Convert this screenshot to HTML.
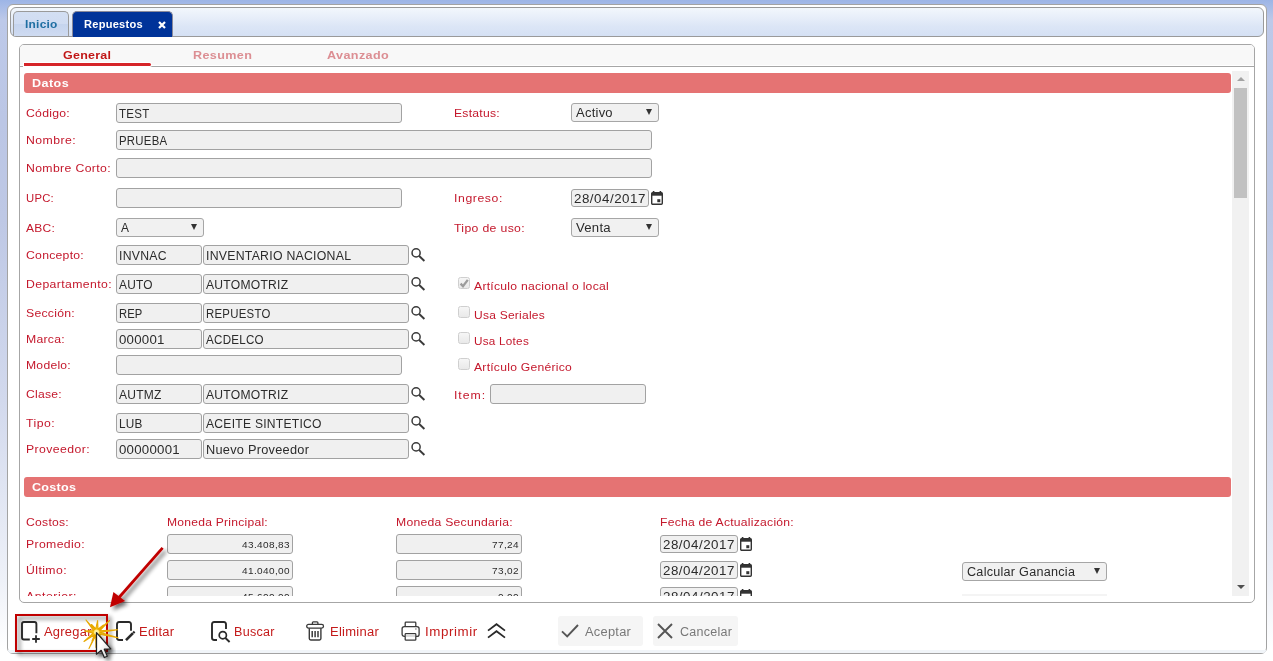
<!DOCTYPE html>
<html><head><meta charset="utf-8"><title>Repuestos</title>
<style>
html,body{margin:0;padding:0;}
body{width:1273px;height:661px;overflow:hidden;position:relative;font-family:"Liberation Sans",sans-serif;
 background:linear-gradient(to bottom,#9db5e6 0px,#a8bce7 7px,#bdc9e9 20px,#bbc6e5 120px,#bec8e5 220px,#d2d9ed 400px,#eef1f8 580px,#ffffff 650px);}
.abs{position:absolute;box-sizing:border-box;}
.t{position:absolute;white-space:nowrap;line-height:20px;height:20px;transform-origin:0 0;}
.in{position:absolute;box-sizing:border-box;border:1px solid #a2a2a2;border-radius:3px;background:#f0f0f0;height:20px;}
.sel{position:absolute;box-sizing:border-box;border:1px solid #a6a6a6;border-radius:3px;background:#f1f1f1;height:19px;}
.arr{position:absolute;width:0;height:0;border-left:3.5px solid transparent;border-right:3.5px solid transparent;border-top:6px solid #333;}
.cb{position:absolute;box-sizing:border-box;width:12px;height:12px;border:1px solid #cfcfcf;border-radius:2.5px;background:linear-gradient(#f6f6f6,#e9e9e9);}
.hdr{position:absolute;left:24px;width:1207px;height:20px;background:#e57373;border-radius:3px;}
svg{position:absolute;overflow:visible;}
</style></head><body>

<div class="abs" style="left:7px;top:4px;width:1260px;height:650px;border:1px solid #a3a3a3;border-radius:6px;background:#fff;"></div>
<div class="abs" style="left:8px;top:650px;width:1258px;height:3px;background:#f1f5f9;border-radius:0 0 5px 5px;"></div>
<div class="abs" style="left:10px;top:7px;width:1254px;height:30px;border:1px solid #9a9a9a;border-radius:6px;background:linear-gradient(#f2f7fc 0%,#e7eef9 35%,#dce6f6 65%,#d5e1f4 100%);"></div>
<div class="abs" style="left:13px;top:11px;width:56px;height:25px;border:1px solid #9a9a9a;border-bottom:none;border-radius:5px 5px 0 0;background:linear-gradient(#d3dff3 0%,#d0dcf2 48%,#c5d4ee 52%,#cfdbf1 100%);"></div>
<span class="t" style="left:25.00px;top:14.00px;font-size:11.00px;letter-spacing:0.231px;color:#1f6fa3;font-weight:bold;transform:scaleX(1.0827);">Inicio</span>
<div class="abs" style="left:72px;top:11px;width:101px;height:26px;border:1px solid #8a8a9a;border-bottom:none;border-radius:5px 5px 0 0;background:#003399;"></div>
<span class="t" style="left:83.50px;top:14.00px;font-size:11.00px;letter-spacing:0.248px;color:#ffffff;font-weight:bold;transform:scaleX(1.0056);">Repuestos</span>
<svg style="left:157.5px;top:21px" width="8" height="8" viewBox="0 0 8 8"><path d="M1 1 L7 7 M7 1 L1 7" stroke="#fff" stroke-width="2.2" fill="none"/></svg>
<div class="abs" style="left:19px;top:44px;width:1236px;height:559px;border:1px solid #a6a6a6;border-radius:5px;background:#fff;"></div>
<div class="abs" style="left:20px;top:45px;width:1234px;height:21px;background:#f8f8f8;border-radius:4px 4px 0 0;"></div>
<div class="abs" style="left:20px;top:66px;width:1234px;height:1px;background:#a6a6a6;"></div>
<span class="t" style="left:62.50px;top:45.00px;font-size:11.44px;letter-spacing:0.229px;color:#c01616;font-weight:bold;transform:scaleX(1.0903);text-shadow:0 0 1px #fff;">General</span>
<div class="abs" style="left:20px;top:65px;width:1234px;height:1px;background:#fff;"></div>
<div class="abs" style="left:24px;top:63px;width:127px;height:3px;background:#d62428;border-radius:0 2px 2px 0;box-shadow:0 0 0 1px #fff;"></div>
<span class="t" style="left:193.00px;top:45.00px;font-size:11.44px;letter-spacing:0.331px;color:#dc8e93;font-weight:bold;transform:scaleX(1.1);">Resumen</span>
<span class="t" style="left:326.50px;top:45.00px;font-size:11.44px;letter-spacing:0.367px;color:#dc8e93;font-weight:bold;transform:scaleX(1.1);">Avanzado</span>
<div class="abs" style="left:1232px;top:71px;width:17px;height:525px;background:#f1f1f1;"></div>
<div class="abs" style="left:1234px;top:88px;width:13px;height:110px;background:#c1c1c1;"></div>
<div class="abs" style="left:1236.5px;top:77px;width:0;height:0;border-left:4px solid transparent;border-right:4px solid transparent;border-bottom:4px solid #a3a3a3;"></div>
<div class="abs" style="left:1236.5px;top:585px;width:0;height:0;border-left:4px solid transparent;border-right:4px solid transparent;border-top:4px solid #505050;"></div>
<div class="abs" style="left:20px;top:67px;width:1212px;height:529px;overflow:hidden;"><div class="abs" style="left:-20px;top:-67px;width:1273px;height:661px;">
<div class="hdr" style="top:73px;"></div>
<span class="t" style="left:32.00px;top:73.00px;font-size:11.44px;letter-spacing:0.407px;color:#fff;font-weight:bold;transform:scaleX(1.1);">Datos</span>
<div class="hdr" style="top:477px;"></div>
<span class="t" style="left:32.00px;top:477.00px;font-size:11.44px;letter-spacing:0.235px;color:#fff;font-weight:bold;transform:scaleX(1.1);">Costos</span>
<span class="t" style="left:26.00px;top:103.00px;font-size:11.44px;letter-spacing:0.241px;color:#c4182c;transform:scaleX(1.07);">Código:</span>
<div class="in" style="left:116px;top:103px;width:286px;height:20px;"></div>
<span class="t" style="left:119.00px;top:104.00px;font-size:12.48px;letter-spacing:0.269px;color:#2b2b2b;transform:scaleX(0.9273);">TEST</span>
<span class="t" style="left:26.00px;top:130.00px;font-size:11.44px;letter-spacing:0.409px;color:#c4182c;transform:scaleX(1.07);">Nombre:</span>
<div class="in" style="left:116px;top:130px;width:536px;height:20px;"></div>
<span class="t" style="left:119.00px;top:131.00px;font-size:12.48px;letter-spacing:0.274px;color:#2b2b2b;transform:scaleX(0.9135);">PRUEBA</span>
<span class="t" style="left:26.00px;top:158.00px;font-size:11.44px;letter-spacing:0.340px;color:#c4182c;transform:scaleX(1.07);">Nombre Corto:</span>
<div class="in" style="left:116px;top:158px;width:536px;height:20px;"></div>
<span class="t" style="left:26.00px;top:188.00px;font-size:11.44px;letter-spacing:0.253px;color:#c4182c;transform:scaleX(0.9878);">UPC:</span>
<div class="in" style="left:116px;top:188px;width:286px;height:20px;"></div>
<span class="t" style="left:26.00px;top:218.00px;font-size:11.44px;letter-spacing:0.239px;color:#c4182c;transform:scaleX(1.0486);">ABC:</span>
<div class="sel" style="left:116px;top:218px;width:88px;"></div>
<span class="t" style="left:121.00px;top:218.00px;font-size:12.48px;letter-spacing:0.261px;color:#2b2b2b;transform:scaleX(0.956);">A</span>
<div class="arr" style="left:190.5px;top:224px;"></div>
<span class="t" style="left:26.00px;top:245.00px;font-size:11.44px;letter-spacing:0.234px;color:#c4182c;transform:scaleX(1.069);">Concepto:</span>
<div class="in" style="left:116px;top:245px;width:86px;height:20px;"></div>
<span class="t" style="left:119.00px;top:246.00px;font-size:12.48px;letter-spacing:0.255px;color:#2b2b2b;transform:scaleX(0.9818);">INVNAC</span>
<div class="in" style="left:203px;top:245px;width:206px;height:20px;"></div>
<span class="t" style="left:206.00px;top:246.00px;font-size:12.48px;letter-spacing:0.254px;color:#2b2b2b;transform:scaleX(0.986);">INVENTARIO NACIONAL</span>
<svg style="left:411px;top:245px" width="16" height="18" viewBox="0 0 16 18"><circle cx="5.1" cy="7.9" r="4.05" stroke="#3a3a3a" stroke-width="1.5" fill="none"/><path d="M8.2 11 L13.4 16" stroke="#3a3a3a" stroke-width="1.9" fill="none"/></svg>
<span class="t" style="left:26.00px;top:274.00px;font-size:11.44px;letter-spacing:0.361px;color:#c4182c;transform:scaleX(1.07);">Departamento:</span>
<div class="in" style="left:116px;top:274px;width:86px;height:20px;"></div>
<span class="t" style="left:119.00px;top:275.00px;font-size:12.48px;letter-spacing:0.262px;color:#2b2b2b;transform:scaleX(0.9531);">AUTO</span>
<div class="in" style="left:203px;top:274px;width:206px;height:20px;"></div>
<span class="t" style="left:206.00px;top:275.00px;font-size:12.48px;letter-spacing:0.257px;color:#2b2b2b;transform:scaleX(0.9711);">AUTOMOTRIZ</span>
<svg style="left:411px;top:274px" width="16" height="18" viewBox="0 0 16 18"><circle cx="5.1" cy="7.9" r="4.05" stroke="#3a3a3a" stroke-width="1.5" fill="none"/><path d="M8.2 11 L13.4 16" stroke="#3a3a3a" stroke-width="1.9" fill="none"/></svg>
<span class="t" style="left:26.00px;top:303.00px;font-size:11.44px;letter-spacing:0.239px;color:#c4182c;transform:scaleX(1.07);">Sección:</span>
<div class="in" style="left:116px;top:303px;width:86px;height:20px;"></div>
<span class="t" style="left:119.00px;top:304.00px;font-size:12.48px;letter-spacing:0.024px;color:#2b2b2b;transform:scaleX(0.9);">REP</span>
<div class="in" style="left:203px;top:303px;width:206px;height:20px;"></div>
<span class="t" style="left:206.00px;top:304.00px;font-size:12.48px;letter-spacing:0.273px;color:#2b2b2b;transform:scaleX(0.9144);">REPUESTO</span>
<svg style="left:411px;top:303px" width="16" height="18" viewBox="0 0 16 18"><circle cx="5.1" cy="7.9" r="4.05" stroke="#3a3a3a" stroke-width="1.5" fill="none"/><path d="M8.2 11 L13.4 16" stroke="#3a3a3a" stroke-width="1.9" fill="none"/></svg>
<span class="t" style="left:26.00px;top:329.00px;font-size:11.44px;letter-spacing:0.248px;color:#c4182c;transform:scaleX(1.07);">Marca:</span>
<div class="in" style="left:116px;top:329px;width:86px;height:20px;"></div>
<span class="t" style="left:119.00px;top:330.00px;font-size:12.48px;letter-spacing:0.235px;color:#2b2b2b;transform:scaleX(1.0635);">000001</span>
<div class="in" style="left:203px;top:329px;width:206px;height:20px;"></div>
<span class="t" style="left:206.00px;top:330.00px;font-size:12.48px;letter-spacing:0.269px;color:#2b2b2b;transform:scaleX(0.931);">ACDELCO</span>
<svg style="left:411px;top:329px" width="16" height="18" viewBox="0 0 16 18"><circle cx="5.1" cy="7.9" r="4.05" stroke="#3a3a3a" stroke-width="1.5" fill="none"/><path d="M8.2 11 L13.4 16" stroke="#3a3a3a" stroke-width="1.9" fill="none"/></svg>
<span class="t" style="left:26.00px;top:384.00px;font-size:11.44px;letter-spacing:0.235px;color:#c4182c;transform:scaleX(1.0639);">Clase:</span>
<div class="in" style="left:116px;top:384px;width:86px;height:20px;"></div>
<span class="t" style="left:119.00px;top:385.00px;font-size:12.48px;letter-spacing:0.260px;color:#2b2b2b;transform:scaleX(0.9648);">AUTMZ</span>
<div class="in" style="left:203px;top:384px;width:206px;height:20px;"></div>
<span class="t" style="left:206.00px;top:385.00px;font-size:12.48px;letter-spacing:0.257px;color:#2b2b2b;transform:scaleX(0.9711);">AUTOMOTRIZ</span>
<svg style="left:411px;top:384px" width="16" height="18" viewBox="0 0 16 18"><circle cx="5.1" cy="7.9" r="4.05" stroke="#3a3a3a" stroke-width="1.5" fill="none"/><path d="M8.2 11 L13.4 16" stroke="#3a3a3a" stroke-width="1.9" fill="none"/></svg>
<span class="t" style="left:26.00px;top:413.00px;font-size:11.44px;letter-spacing:0.419px;color:#c4182c;transform:scaleX(1.07);">Tipo:</span>
<div class="in" style="left:116px;top:413px;width:86px;height:20px;"></div>
<span class="t" style="left:119.00px;top:414.00px;font-size:12.48px;letter-spacing:0.264px;color:#2b2b2b;transform:scaleX(0.9453);">LUB</span>
<div class="in" style="left:203px;top:413px;width:206px;height:20px;"></div>
<span class="t" style="left:206.00px;top:414.00px;font-size:12.48px;letter-spacing:0.257px;color:#2b2b2b;transform:scaleX(0.9721);">ACEITE SINTETICO</span>
<svg style="left:411px;top:413px" width="16" height="18" viewBox="0 0 16 18"><circle cx="5.1" cy="7.9" r="4.05" stroke="#3a3a3a" stroke-width="1.5" fill="none"/><path d="M8.2 11 L13.4 16" stroke="#3a3a3a" stroke-width="1.9" fill="none"/></svg>
<span class="t" style="left:26.00px;top:439.00px;font-size:11.44px;letter-spacing:0.385px;color:#c4182c;transform:scaleX(1.07);">Proveedor:</span>
<div class="in" style="left:116px;top:439px;width:86px;height:20px;"></div>
<span class="t" style="left:119.00px;top:440.00px;font-size:12.48px;letter-spacing:0.235px;color:#2b2b2b;transform:scaleX(1.0635);">00000001</span>
<div class="in" style="left:203px;top:439px;width:206px;height:20px;"></div>
<span class="t" style="left:206.00px;top:440.00px;font-size:12.48px;letter-spacing:0.244px;color:#2b2b2b;transform:scaleX(1.0247);">Nuevo Proveedor</span>
<svg style="left:411px;top:439px" width="16" height="18" viewBox="0 0 16 18"><circle cx="5.1" cy="7.9" r="4.05" stroke="#3a3a3a" stroke-width="1.5" fill="none"/><path d="M8.2 11 L13.4 16" stroke="#3a3a3a" stroke-width="1.9" fill="none"/></svg>
<span class="t" style="left:26.00px;top:355.00px;font-size:11.44px;letter-spacing:0.235px;color:#c4182c;transform:scaleX(1.0626);">Modelo:</span>
<div class="in" style="left:116px;top:355px;width:286px;height:20px;"></div>
<span class="t" style="left:454.00px;top:103.00px;font-size:11.44px;letter-spacing:0.235px;color:#c4182c;transform:scaleX(1.0646);">Estatus:</span>
<div class="sel" style="left:571px;top:103px;width:88px;"></div>
<span class="t" style="left:576.00px;top:103.00px;font-size:12.48px;letter-spacing:0.240px;color:#2b2b2b;transform:scaleX(1.0406);">Activo</span>
<div class="arr" style="left:645.5px;top:109px;"></div>
<span class="t" style="left:454.00px;top:188.00px;font-size:11.44px;letter-spacing:0.557px;color:#c4182c;transform:scaleX(1.07);">Ingreso:</span>
<div class="in" style="left:571px;top:189px;width:78px;height:18px;"></div>
<span class="t" style="left:574.00px;top:189.00px;font-size:12.48px;letter-spacing:0.478px;color:#2b2b2b;transform:scaleX(1.07);">28/04/2017</span>
<svg style="left:651px;top:191px" width="12" height="14" viewBox="0 0 12 14"><path d="M2.6 0 V2 M9.4 0 V2" stroke="#333" stroke-width="1.6" fill="none"/><rect x="0.7" y="1.7" width="10.6" height="11.6" rx="1" ry="1" fill="none" stroke="#333" stroke-width="1.4"/><rect x="0.7" y="1.7" width="10.6" height="3" fill="#333"/><rect x="6.3" y="8.2" width="3" height="3" fill="#333"/></svg>
<span class="t" style="left:454.00px;top:218.00px;font-size:11.44px;letter-spacing:0.318px;color:#c4182c;transform:scaleX(1.07);">Tipo de uso:</span>
<div class="sel" style="left:571px;top:218px;width:88px;"></div>
<span class="t" style="left:576.00px;top:218.00px;font-size:12.48px;letter-spacing:0.237px;color:#2b2b2b;transform:scaleX(1.0539);">Venta</span>
<div class="arr" style="left:645.5px;top:224px;"></div>
<div class="cb" style="left:458px;top:277px;"></div>
<svg style="left:458px;top:277px" width="13" height="13" viewBox="0 0 13 13"><path d="M2.6 6.6 L5 9.2 L9.8 2.9" stroke="#9c9c9c" stroke-width="2.3" fill="none"/></svg>
<span class="t" style="left:474.00px;top:276.00px;font-size:11.44px;letter-spacing:0.234px;color:#c4182c;transform:scaleX(1.0656);">Artículo nacional o local</span>
<div class="cb" style="left:458px;top:306px;"></div>
<span class="t" style="left:474.00px;top:305.00px;font-size:11.44px;letter-spacing:0.238px;color:#c4182c;transform:scaleX(1.0485);">Usa Seriales</span>
<div class="cb" style="left:458px;top:332px;"></div>
<span class="t" style="left:474.00px;top:331.00px;font-size:11.44px;letter-spacing:0.244px;color:#c4182c;transform:scaleX(1.0241);">Usa Lotes</span>
<div class="cb" style="left:458px;top:358px;"></div>
<span class="t" style="left:474.00px;top:357.00px;font-size:11.44px;letter-spacing:0.236px;color:#c4182c;transform:scaleX(1.0607);">Artículo Genérico</span>
<span class="t" style="left:454.00px;top:385.00px;font-size:11.44px;letter-spacing:0.896px;color:#c4182c;transform:scaleX(1.07);">Item:</span>
<div class="in" style="left:490px;top:384px;width:156px;height:20px;"></div>
<span class="t" style="left:26.00px;top:512.00px;font-size:11.44px;letter-spacing:0.235px;color:#c4182c;transform:scaleX(1.0636);">Costos:</span>
<span class="t" style="left:167.00px;top:512.00px;font-size:11.44px;letter-spacing:0.237px;color:#c4182c;transform:scaleX(1.0565);">Moneda Principal:</span>
<span class="t" style="left:396.00px;top:512.00px;font-size:11.44px;letter-spacing:0.234px;color:#c4182c;transform:scaleX(1.0656);">Moneda Secundaria:</span>
<span class="t" style="left:660.00px;top:512.00px;font-size:11.44px;letter-spacing:0.235px;color:#c4182c;transform:scaleX(1.0614);">Fecha de Actualización:</span>
<span class="t" style="left:26.00px;top:534.00px;font-size:11.44px;letter-spacing:0.333px;color:#c4182c;transform:scaleX(1.07);">Promedio:</span>
<div class="in" style="left:167px;top:534px;width:126px;height:20px;"></div>
<span class="t" style="left:242.00px;top:535.00px;font-size:9.36px;letter-spacing:0.358px;color:#2b2b2b;transform:scaleX(1.07);">43.408,83</span>
<div class="in" style="left:396px;top:534px;width:126px;height:20px;"></div>
<span class="t" style="left:491.50px;top:535.00px;font-size:9.36px;letter-spacing:0.362px;color:#2b2b2b;transform:scaleX(1.07);">77,24</span>
<div class="in" style="left:660px;top:535px;width:78px;height:18px;"></div>
<span class="t" style="left:663.00px;top:535.00px;font-size:12.48px;letter-spacing:0.478px;color:#2b2b2b;transform:scaleX(1.07);">28/04/2017</span>
<svg style="left:740px;top:537px" width="12" height="14" viewBox="0 0 12 14"><path d="M2.6 0 V2 M9.4 0 V2" stroke="#333" stroke-width="1.6" fill="none"/><rect x="0.7" y="1.7" width="10.6" height="11.6" rx="1" ry="1" fill="none" stroke="#333" stroke-width="1.4"/><rect x="0.7" y="1.7" width="10.6" height="3" fill="#333"/><rect x="6.3" y="8.2" width="3" height="3" fill="#333"/></svg>
<span class="t" style="left:26.00px;top:560.00px;font-size:11.44px;letter-spacing:0.389px;color:#c4182c;transform:scaleX(1.07);">Último:</span>
<div class="in" style="left:167px;top:560px;width:126px;height:20px;"></div>
<span class="t" style="left:242.00px;top:561.00px;font-size:9.36px;letter-spacing:0.358px;color:#2b2b2b;transform:scaleX(1.07);">41.040,00</span>
<div class="in" style="left:396px;top:560px;width:126px;height:20px;"></div>
<span class="t" style="left:491.50px;top:561.00px;font-size:9.36px;letter-spacing:0.362px;color:#2b2b2b;transform:scaleX(1.07);">73,02</span>
<div class="in" style="left:660px;top:561px;width:78px;height:18px;"></div>
<span class="t" style="left:663.00px;top:561.00px;font-size:12.48px;letter-spacing:0.478px;color:#2b2b2b;transform:scaleX(1.07);">28/04/2017</span>
<svg style="left:740px;top:563px" width="12" height="14" viewBox="0 0 12 14"><path d="M2.6 0 V2 M9.4 0 V2" stroke="#333" stroke-width="1.6" fill="none"/><rect x="0.7" y="1.7" width="10.6" height="11.6" rx="1" ry="1" fill="none" stroke="#333" stroke-width="1.4"/><rect x="0.7" y="1.7" width="10.6" height="3" fill="#333"/><rect x="6.3" y="8.2" width="3" height="3" fill="#333"/></svg>
<span class="t" style="left:26.00px;top:586.00px;font-size:11.44px;letter-spacing:0.492px;color:#c4182c;transform:scaleX(1.07);">Anterior:</span>
<div class="in" style="left:167px;top:586px;width:126px;height:20px;"></div>
<span class="t" style="left:242.00px;top:587.00px;font-size:9.36px;letter-spacing:0.358px;color:#2b2b2b;transform:scaleX(1.07);">45.600,00</span>
<div class="in" style="left:396px;top:586px;width:126px;height:20px;"></div>
<span class="t" style="left:497.50px;top:587.00px;font-size:9.36px;letter-spacing:0.352px;color:#2b2b2b;transform:scaleX(1.07);">0,00</span>
<div class="in" style="left:660px;top:587px;width:78px;height:18px;"></div>
<span class="t" style="left:663.00px;top:587.00px;font-size:12.48px;letter-spacing:0.478px;color:#2b2b2b;transform:scaleX(1.07);">28/04/2017</span>
<svg style="left:740px;top:589px" width="12" height="14" viewBox="0 0 12 14"><path d="M2.6 0 V2 M9.4 0 V2" stroke="#333" stroke-width="1.6" fill="none"/><rect x="0.7" y="1.7" width="10.6" height="11.6" rx="1" ry="1" fill="none" stroke="#333" stroke-width="1.4"/><rect x="0.7" y="1.7" width="10.6" height="3" fill="#333"/><rect x="6.3" y="8.2" width="3" height="3" fill="#333"/></svg>
<div class="sel" style="left:962px;top:562px;width:145px;"></div>
<span class="t" style="left:967.00px;top:562.00px;font-size:12.48px;letter-spacing:0.247px;color:#2b2b2b;transform:scaleX(1.0129);">Calcular Ganancia</span>
<div class="arr" style="left:1093.5px;top:568px;"></div>
<div class="abs" style="left:962px;top:594px;width:145px;height:2px;background:#f4f4f4;"></div>
</div></div>
<svg style="left:21px;top:621px" width="20" height="22" viewBox="0 0 20 22"><path d="M15.4 12.3 V2.9 Q15.4 1 13.5 1 H2.9 Q1 1 1 2.9 V16.6 Q1 18.5 2.9 18.5 H8.8" stroke="#2a2a2a" stroke-width="1.9" fill="none"/><path d="M15 14.3 V21.8 M11.2 18 H18.8" stroke="#2a2a2a" stroke-width="1.8" fill="none"/></svg>
<span class="t" style="left:43.50px;top:622.00px;font-size:12.48px;letter-spacing:0.241px;color:#c41a1a;transform:scaleX(1.0365);">Agregar</span>
<svg style="left:116px;top:621px" width="20" height="20" viewBox="0 0 20 20"><path d="M15 9.8 V3.2 Q15 1 12.8 1 H3.2 Q1 1 1 3.2 V16.8 Q1 19 3.2 19 H7" stroke="#2a2a2a" stroke-width="1.9" fill="none"/><path d="M10 19.2 L17 12.2" stroke="#2a2a2a" stroke-width="2.6" fill="none"/><path d="M17.2 12 L18.6 10.6" stroke="#2a2a2a" stroke-width="2.2" fill="none"/></svg>
<span class="t" style="left:139.00px;top:622.00px;font-size:12.48px;letter-spacing:0.241px;color:#c41a1a;transform:scaleX(1.0401);">Editar</span>
<svg style="left:211px;top:621px" width="20" height="22" viewBox="0 0 20 22"><path d="M15 8 V3.2 Q15 1 12.8 1 H3.2 Q1 1 1 3.2 V16.8 Q1 19 3.2 19 H6" stroke="#2a2a2a" stroke-width="1.9" fill="none"/><circle cx="11.8" cy="14.2" r="3.6" stroke="#2a2a2a" stroke-width="1.7" fill="none"/><path d="M14.4 17 L18.6 21" stroke="#2a2a2a" stroke-width="1.9" fill="none"/></svg>
<span class="t" style="left:234.00px;top:622.00px;font-size:12.48px;letter-spacing:0.248px;color:#c41a1a;transform:scaleX(1.0084);">Buscar</span>
<svg style="left:306px;top:621px" width="18" height="20" viewBox="0 0 18 20"><rect x="0.7" y="3.4" width="16.8" height="3.7" rx="1.8" ry="1.8" stroke="#3a3a3a" stroke-width="1.3" fill="none"/><path d="M6.4 3.3 V1.7 Q6.4 0.8 7.3 0.8 H11 Q11.9 0.8 11.9 1.7 V3.3" stroke="#3a3a3a" stroke-width="1.3" fill="none"/><path d="M3.3 7.2 V17.6 Q3.3 19 4.7 19 H13.5 Q14.9 19 14.9 17.6 V7.2" stroke="#3a3a3a" stroke-width="1.4" fill="none"/><path d="M6.2 10 V16.2 M9.1 10 V16.2 M12 10 V16.2" stroke="#3a3a3a" stroke-width="1.5" fill="none"/></svg>
<span class="t" style="left:329.50px;top:622.00px;font-size:12.48px;letter-spacing:0.239px;color:#c41a1a;transform:scaleX(1.0439);">Eliminar</span>
<svg style="left:400.5px;top:621px" width="19" height="20" viewBox="0 0 19 20"><path d="M4.2 5.4 V1.9 Q4.2 1.1 5 1.1 H14 Q14.8 1.1 14.8 1.9 V5.4" stroke="#3a3a3a" stroke-width="1.3" fill="none"/><rect x="1.1" y="5.6" width="17" height="9.8" rx="2.2" ry="2.2" stroke="#3a3a3a" stroke-width="1.3" fill="#fff"/><rect x="4.2" y="12.6" width="10.6" height="6.6" rx="0.8" fill="#fff" stroke="#3a3a3a" stroke-width="1.3"/><rect x="4.9" y="13.3" width="9.2" height="2.6" fill="#d9d9d9"/><circle cx="14.9" cy="8" r="0.7" fill="#666"/></svg>
<span class="t" style="left:424.50px;top:622.00px;font-size:12.48px;letter-spacing:0.525px;color:#c41a1a;transform:scaleX(1.07);">Imprimir</span>
<svg style="left:487px;top:623px" width="19" height="16" viewBox="0 0 19 16"><path d="M1 7.6 L9.5 1.2 L18 7.6 M1 14.6 L9.5 8.2 L18 14.6" stroke="#2a2a2a" stroke-width="1.8" fill="none"/></svg>
<div class="abs" style="left:558px;top:616px;width:85px;height:30px;background:#f5f5f5;border-radius:3px;"></div>
<svg style="left:561px;top:624px" width="18" height="14" viewBox="0 0 18 14"><path d="M1 7.4 L6.2 12.4 L17 1" stroke="#555" stroke-width="1.9" fill="none"/></svg>
<span class="t" style="left:584.50px;top:622.00px;font-size:12.48px;letter-spacing:0.242px;color:#787878;transform:scaleX(1.0323);">Aceptar</span>
<div class="abs" style="left:653px;top:616px;width:85px;height:30px;background:#f5f5f5;border-radius:3px;"></div>
<svg style="left:657px;top:623px" width="16" height="16" viewBox="0 0 16 16"><path d="M1 1 L15 15 M15 1 L1 15" stroke="#555" stroke-width="1.9" fill="none"/></svg>
<span class="t" style="left:679.50px;top:622.00px;font-size:12.48px;letter-spacing:0.249px;color:#787878;transform:scaleX(1.0053);">Cancelar</span>
<svg style="left:0;top:0" width="1273" height="661" viewBox="0 0 1273 661">
<defs>
<filter id="sh" x="-20%" y="-20%" width="150%" height="150%"><feGaussianBlur in="SourceAlpha" stdDeviation="2"/><feOffset dx="2.5" dy="2.5"/><feComponentTransfer><feFuncA type="linear" slope="0.58"/></feComponentTransfer><feMerge><feMergeNode/><feMergeNode in="SourceGraphic"/></feMerge></filter>
<radialGradient id="sg" gradientUnits="userSpaceOnUse" cx="96.6" cy="632.2" r="14"><stop offset="0" stop-color="#fff6a0"/><stop offset="0.25" stop-color="#f7c81a"/><stop offset="1" stop-color="#eaa900"/></radialGradient>
<linearGradient id="cg" x1="0" y1="0" x2="1" y2="1"><stop offset="0.4" stop-color="#fff"/><stop offset="1" stop-color="#cfcfcf"/></linearGradient>
</defs>
<g filter="url(#sh)">
<rect x="16" y="615" width="91" height="36" fill="none" stroke="#c00000" stroke-width="2"/>
<path d="M162.6 547.9 L119 597.5" stroke="#c00000" stroke-width="2.8" fill="none"/>
<path d="M110 607.2 L113.4 592 L125.1 601.1 Z" fill="#c00000"/>
</g>
<g fill="url(#sg)" stroke="#e8a800" stroke-width="1.1" stroke-linejoin="round">
<path d="M84.5 631.0 L93.6 630.6 L86.0 620.0 L94.5 629.5 L91.5 624.5 L95.8 628.9 L97.6 620.5 L98.0 629.1 L103.5 625.0 L99.0 629.8 L109.5 620.5 L99.7 630.8 L117.5 629.8 L100.0 632.4 L118.0 637.8 L99.4 634.2 L106.0 646.0 L97.5 635.5 L96.0 647.5 L95.8 635.5 L89.0 648.5 L95.1 635.2 L92.0 641.0 L94.4 634.8 L84.0 641.5 L93.3 633.1 Z"/>
</g>
<circle cx="96.6" cy="632.2" r="2.4" fill="#fff3a0" opacity="0.9"/>
<g filter="url(#sh)">
<path d="M96.5 632.6 L96.5 654.2 L101.2 650.3 L104.3 657.5 L107.3 656.2 L104.3 649.2 L110.8 648.8 Z" fill="url(#cg)" stroke="#222" stroke-width="1.25" stroke-linejoin="round"/>
</g>
</svg>
</body></html>
